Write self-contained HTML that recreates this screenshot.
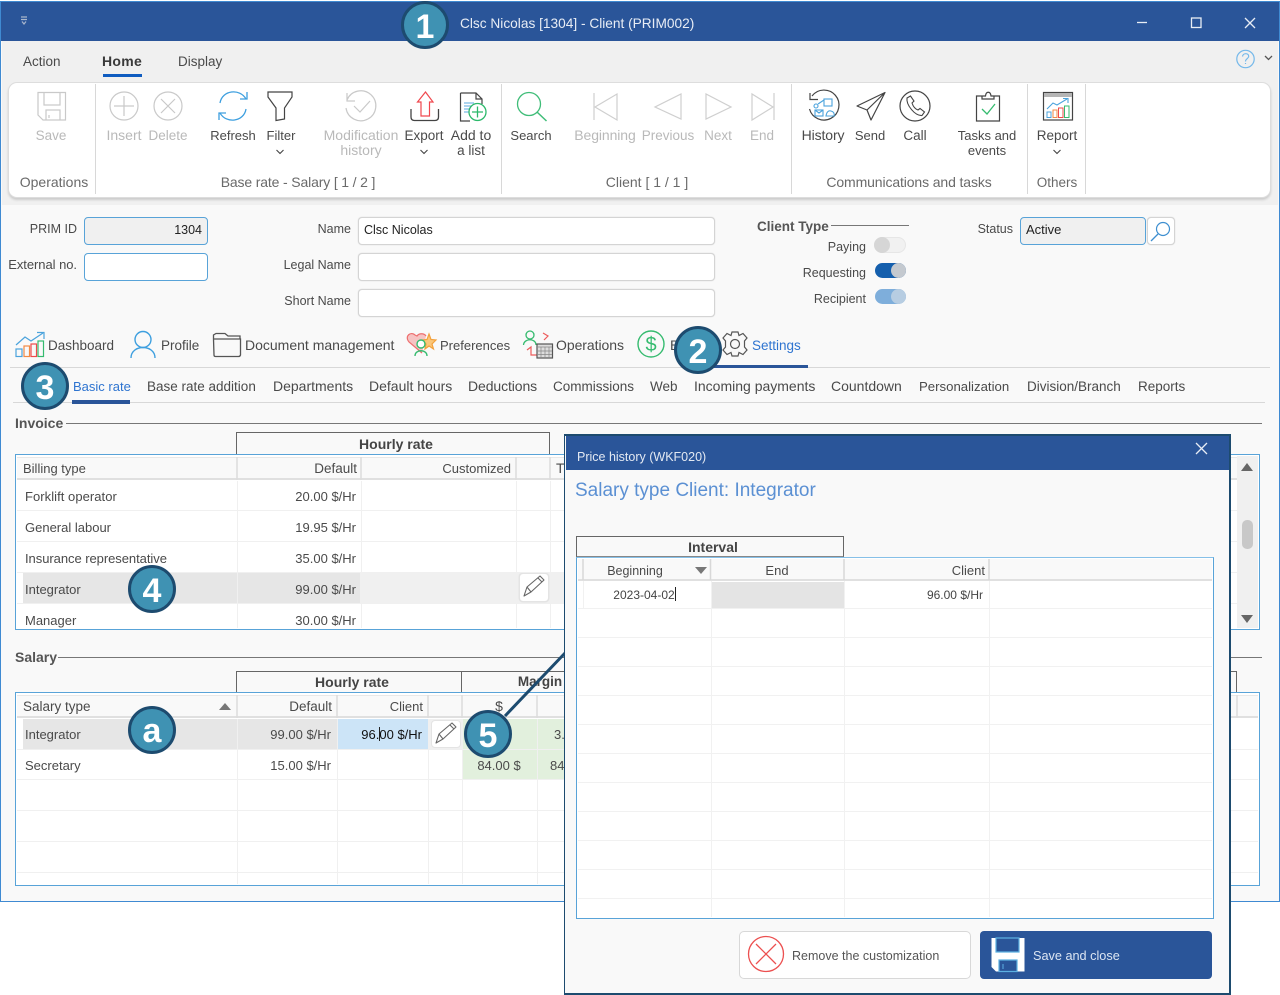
<!DOCTYPE html>
<html><head><meta charset="utf-8"><title>Clsc Nicolas</title>
<style>
html,body{margin:0;padding:0;background:#fff}
#p{position:relative;width:1280px;height:995px;overflow:hidden;background:#fff;font-family:"Liberation Sans",Arial,sans-serif}
.b{position:absolute;box-sizing:border-box}
.t{position:absolute;white-space:nowrap;font-size:14px;line-height:16px;color:#4a4a4a;margin-top:-8px}
.c{transform:translateX(-50%)}
.d{color:#b9b9b9}
.g{color:#6a6a6a}
.r{font-size:13px;color:#4a4a4a}
.l{font-size:12.5px;color:#4a4a4a;margin-top:-7px}
.s{font-size:13.500px;margin-top:-7px}
.m{font-size:13px;margin-top:-7px}
.h{font-weight:bold;font-size:14px;color:#444}
.i{background:#fff;border:1px solid #d4d4d4;border-radius:4px;box-shadow:0 0 1px #ccc}
.bi{border:1.5px solid #58a3d8;border-radius:4px}
.n{position:absolute;width:48px;height:48px;box-sizing:border-box;border:3px solid #1d4b6f;border-radius:50%;background:#3f92b3;color:#fff;font-weight:bold;font-size:34px;line-height:47px;text-align:center;font-family:"Liberation Sans",sans-serif}
svg{position:absolute;left:0;top:0}
</style></head><body><div id="p">

<!-- window -->
<div class="b" style="left:0;top:1px;width:1280px;height:901px;background:#f9f9f9;border:1.5px solid #3f8ad2"></div>
<div class="b" style="left:1px;top:2px;width:1278px;height:39px;background:#2a5599"></div>
<div class="b" style="left:2px;top:41px;width:1276px;height:164px;background:#f0f0f0"></div>
<div class="b" style="left:8px;top:82px;width:1263px;height:116px;background:#fff;border:1px solid #ddd;border-radius:9px;box-shadow:0 2px 2px #ccc"></div>

<div class="t" style="left:460px;top:24px;color:#e8edf5;font-size:13.700px">Clsc Nicolas [1304] - Client (PRIM002)</div>

<div class="t s" style="left:23px;top:61px">Action</div>
<div class="t" style="left:102px;top:61px;font-weight:bold;font-size:14px;letter-spacing:.3px;color:#3a3a3a">Home</div>
<div class="b" style="left:103px;top:74px;width:39px;height:3px;background:#0f5cc0"></div>
<div class="t s" style="left:178px;top:61px">Display</div>

<!-- ribbon labels -->
<div class="t c d s" style="left:51px;top:135px">Save</div>
<div class="t c d" style="left:124px;top:135px">Insert</div>
<div class="t c d s" style="left:168px;top:135px">Delete</div>
<div class="t c m" style="left:233px;top:135px">Refresh</div>
<div class="t c m" style="left:281px;top:135px">Filter</div>
<div class="t c d" style="left:361px;top:135px">Modification</div>
<div class="t c d" style="left:361px;top:150px">history</div>
<div class="t c s" style="left:424px;top:135px">Export</div>
<div class="t c" style="left:471px;top:135px">Add to</div>
<div class="t c s" style="left:471px;top:150px">a list</div>
<div class="t c m" style="left:531px;top:135px">Search</div>
<div class="t c d" style="left:605px;top:135px;letter-spacing:-.1px">Beginning</div>
<div class="t c d s" style="left:668px;top:135px">Previous</div>
<div class="t c d s" style="left:718px;top:135px">Next</div>
<div class="t c d s" style="left:762px;top:135px">End</div>
<div class="t c" style="left:823px;top:135px;letter-spacing:-.1px">History</div>
<div class="t c m" style="left:870px;top:135px">Send</div>
<div class="t c s" style="left:915px;top:135px">Call</div>
<div class="t c m" style="left:987px;top:135px">Tasks and</div>
<div class="t c m" style="left:987px;top:150px">events</div>
<div class="t c s" style="left:1057px;top:135px">Report</div>
<div class="t c g" style="left:54px;top:182px">Operations</div>
<div class="t c g" style="left:298px;top:182px;letter-spacing:-.15px">Base rate - Salary [ 1 / 2 ]</div>
<div class="t c g" style="left:647px;top:182px">Client [ 1 / 1 ]</div>
<div class="t c g" style="left:909px;top:182px;letter-spacing:-.12px">Communications and tasks</div>
<div class="t c g s" style="left:1057px;top:182px">Others</div>

<!-- form -->
<div class="t l" style="right:1203px;top:228px">PRIM ID</div>
<div class="b bi" style="left:84px;top:217px;width:124px;height:28px;background:#f0f0f0"></div>
<div class="t l" style="right:1078px;top:229px;color:#222">1304</div>
<div class="t r" style="right:1203px;top:265px;letter-spacing:-.05px">External no.</div>
<div class="b bi" style="left:84px;top:253px;width:124px;height:28px;background:#fff"></div>
<div class="t l" style="right:929px;top:228px">Name</div>
<div class="b i" style="left:358px;top:217px;width:357px;height:28px"></div>
<div class="t l" style="left:364px;top:229px;color:#222">Clsc Nicolas</div>
<div class="t l" style="right:929px;top:264px">Legal Name</div>
<div class="b i" style="left:358px;top:253px;width:357px;height:28px"></div>
<div class="t l" style="right:929px;top:300px">Short Name</div>
<div class="b i" style="left:358px;top:289px;width:357px;height:28px"></div>

<div class="t h" style="left:757px;top:227px;color:#555;font-size:13.500px">Client Type</div>
<div class="b" style="left:831px;top:225px;width:78px;height:1px;background:#777"></div>
<div class="t l" style="right:414px;top:246px">Paying</div>
<div class="b" style="left:874px;top:237px;width:32px;height:16px;border-radius:8px;background:#f1f1f1;border:1px solid #e6e6e6"></div>
<div class="b" style="left:874px;top:237px;width:16px;height:16px;border-radius:50%;background:#d6d6d6"></div>
<div class="t l" style="right:414px;top:272px">Requesting</div>
<div class="b" style="left:875px;top:263px;width:31px;height:15px;border-radius:8px;background:#155fad"></div>
<div class="b" style="left:891px;top:263px;width:15px;height:15px;border-radius:50%;background:#c4c9cf"></div>
<div class="t l" style="right:414px;top:298px">Recipient</div>
<div class="b" style="left:875px;top:289px;width:31px;height:15px;border-radius:8px;background:#7eaedb"></div>
<div class="b" style="left:891px;top:289px;width:15px;height:15px;border-radius:50%;background:#b7cde2"></div>
<div class="t l" style="right:267px;top:228px">Status</div>
<div class="b bi" style="left:1020px;top:217px;width:126px;height:28px;background:#f0f0f0"></div>
<div class="t r" style="left:1026px;top:230px;color:#222">Active</div>
<div class="b i" style="left:1147px;top:217px;width:28px;height:28px"></div>

<!-- tabs -->
<div class="t s" style="left:48px;top:345px">Dashboard</div>
<div class="t s" style="left:161px;top:345px">Profile</div>
<div class="t" style="left:245px;top:345px">Document management</div>
<div class="t m" style="left:440px;top:345px">Preferences</div>
<div class="t" style="left:556px;top:345px;letter-spacing:-.05px">Operations</div>
<div class="t" style="left:670px;top:345px">B</div>
<div class="t s" style="left:752px;top:345px;color:#2e74d0">Settings</div>
<div class="b" style="left:10px;top:367px;width:1260px;height:1px;background:#d8d8d8"></div>
<div class="b" style="left:712px;top:365px;width:96px;height:3px;background:#2a5599"></div>

<div class="t m" style="left:73px;top:386px;color:#2e74d0">Basic rate</div>
<div class="t s" style="left:147px;top:386px">Base rate addition</div>
<div class="t" style="left:273px;top:386px">Departments</div>
<div class="t" style="left:369px;top:386px">Default hours</div>
<div class="t" style="left:468px;top:386px;letter-spacing:-.1px">Deductions</div>
<div class="t s" style="left:553px;top:386px">Commissions</div>
<div class="t s" style="left:650px;top:386px">Web</div>
<div class="t" style="left:694px;top:386px">Incoming payments</div>
<div class="t" style="left:831px;top:386px">Countdown</div>
<div class="t" style="left:919px;top:387px;font-size:13.200px">Personalization</div>
<div class="t s" style="left:1027px;top:386px">Division/Branch</div>
<div class="t s" style="left:1138px;top:386px">Reports</div>
<div class="b" style="left:13px;top:402px;width:1252px;height:1px;background:#d8d8d8"></div>
<div class="b" style="left:72px;top:400px;width:58px;height:4px;background:#2a5599"></div>

<!-- invoice -->
<div class="t h" style="left:15px;top:423px;color:#555">Invoice</div>
<div class="b" style="left:66px;top:423px;width:1196px;height:1px;background:#777"></div>
<div class="b" style="left:236px;top:432px;width:314px;height:23px;border:1px solid #666;border-bottom:none"></div>
<div class="t h c" style="left:396px;top:444px">Hourly rate</div>
<div class="b" style="left:15px;top:454px;width:1245px;height:176px;background:#fff;border:1.5px solid #58a3d8"></div>
<div class="b" style="left:17px;top:457px;width:1220px;height:23px;background:#f9f9f9;border-bottom:2px solid #e0e0e0;border-top:1px solid #e8e8e8"></div>
<div class="b" style="left:23px;top:572px;width:337px;height:31px;background:#e6e6e6"></div>
<div class="b" style="left:360px;top:572px;width:204px;height:31px;background:#f0f0f0"></div>
<div class="b" style="left:1237px;top:456px;width:21px;height:172px;background:#f0f0f0"></div>
<div class="b" style="left:1242px;top:520px;width:11px;height:29px;border-radius:5px;background:#c8c8c8"></div>

<div class="t r" style="left:23px;top:469px">Billing type</div>
<div class="t r s" style="right:923px;top:468px">Default</div>
<div class="t r" style="right:769px;top:469px">Customized</div>
<div class="t r" style="left:556px;top:468px;font-size:14px">T</div>
<div class="t r" style="left:25px;top:497px;letter-spacing:.05px">Forklift operator</div>
<div class="t r" style="right:924px;top:497px">20.00 $/Hr</div>
<div class="t r" style="left:25px;top:528px">General labour</div>
<div class="t r" style="right:924px;top:528px">19.95 $/Hr</div>
<div class="t r" style="left:25px;top:559px;letter-spacing:-.05px">Insurance representative</div>
<div class="t r" style="right:924px;top:559px">35.00 $/Hr</div>
<div class="t r" style="left:25px;top:590px">Integrator</div>
<div class="t r" style="right:924px;top:590px">99.00 $/Hr</div>
<div class="t r" style="left:25px;top:621px">Manager</div>
<div class="t r" style="right:924px;top:621px">30.00 $/Hr</div>
<div class="b i" style="left:519px;top:573px;width:30px;height:29px;border-color:#e4e4e4"></div>

<!-- salary -->
<div class="t h" style="left:15px;top:657px;color:#555">Salary</div>
<div class="b" style="left:58px;top:657px;width:1204px;height:1px;background:#777"></div>
<div class="b" style="left:236px;top:671px;width:226px;height:22px;border:1px solid #666;border-bottom:none"></div>
<div class="b" style="left:462px;top:671px;width:775px;height:22px;border:1px solid #666;border-left:none;border-bottom:none"></div>
<div class="t h c" style="left:352px;top:682px">Hourly rate</div>
<div class="t h c" style="left:540px;top:682px;font-size:13.500px">Margin</div>
<div class="b" style="left:15px;top:692px;width:1245px;height:194px;background:#fff;border:1.5px solid #58a3d8"></div>
<div class="b" style="left:17px;top:695px;width:1241px;height:23px;background:#f9f9f9;border-bottom:2px solid #e0e0e0;border-top:1px solid #e8e8e8"></div>
<div class="b" style="left:23px;top:719px;width:314px;height:30px;background:#e6e6e6"></div>
<div class="b" style="left:338px;top:719px;width:90px;height:30px;background:#cce4f7"></div>
<div class="b" style="left:429px;top:719px;width:33px;height:30px;background:#f0f0f0"></div>
<div class="b" style="left:463px;top:719px;width:101px;height:60px;background:#e2f0dd"></div>
<div class="b" style="left:431px;top:720px;width:30px;height:28px;background:#fff;border:1px solid #e4e4e4;border-radius:4px"></div>
<div class="t r s" style="left:23px;top:706px">Salary type</div>
<div class="t r s" style="right:948px;top:706px">Default</div>
<div class="t r" style="right:857px;top:707px">Client</div>
<div class="t r c" style="left:499px;top:706px;font-size:14px">$</div>
<div class="t r" style="left:25px;top:735px">Integrator</div>
<div class="t r" style="right:949px;top:735px">99.00 $/Hr</div>
<div class="t r" style="right:858px;top:735px;color:#111">96.00 $/Hr</div>
<div class="b" style="left:379px;top:727px;width:1px;height:14px;background:#222"></div>
<div class="t r" style="left:554px;top:735px">3.</div>
<div class="t r" style="left:25px;top:766px">Secretary</div>
<div class="t r" style="right:949px;top:766px">15.00 $/Hr</div>
<div class="t r c" style="left:499px;top:766px">84.00 $</div>
<div class="t r" style="left:550px;top:766px">84</div>

<!-- grid lines and icons -->
<svg width="1280" height="995" fill="none">
<!-- invoice grid -->
<g stroke="#f0f0f0">
<path d="M17 510.500H1237M17 541.500H1237M17 572.500H1237M17 603.500H1237"/>
<path d="M237.500 481V628M361.500 481V628M516.500 481V628M550.500 481V628"/>
<path d="M17 749.500H1258M17 779.500H1258M17 810.500H1258M17 841.500H1258M17 872.500H1258"/>
<path d="M237.500 719V884M337.500 719V884M428.500 719V884M462.500 719V884M537.500 719V884"/>
</g>
<g stroke="#dcdcdc" stroke-width="1.500">
<path d="M237 457V480M361 457V480M516 457V480M550 457V480"/>
<path d="M237 695V718M337 695V718M428 695V718M462 695V718M537 695V718M1237 695V718"/>
</g>
<path d="M1241 471L1247 463L1253 471ZM1241 615L1253 615L1247 623Z" fill="#666"/>
<path d="M219 710L225 703L231 710Z" fill="#777"/>
<!-- pencils -->
<g stroke="#666" stroke-width="1.100" stroke-linejoin="round">
<path d="M524 597L527 588L540 577L544 581L531 593ZM527 588L531 593M538 579L542 583" transform="translate(0,-1)"/>
<path d="M436 743L439 734L452 723L456 727L443 739ZM439 734L443 739M450 725L454 729"/>
</g>
<!-- title bar -->
<path d="M21 17H27M21 19.500H27M22 21.500L24 24L26 21.500" stroke="#a9b6cc" stroke-width="1.200"/>
<path d="M1137 22.500H1147" stroke="#e8edf5" stroke-width="1.300"/>
<rect x="1191.500" y="18" width="9.500" height="9.500" stroke="#e8edf5" stroke-width="1.300"/>
<path d="M1245 18L1255 28M1255 18L1245 28" stroke="#e8edf5" stroke-width="1.300"/>
<circle cx="1245.500" cy="59" r="8.700" stroke="#74b8ea" stroke-width="1.200"/>
<path d="M1242.500 56.500C1243 52.500 1249 53 1248.700 56.500C1248.500 58.500 1245.500 58.800 1245.500 61.500M1245.500 63V64" stroke="#74b8ea" stroke-width="1.200"/>
<path d="M1265 56L1268.500 59.500L1272 56" stroke="#555" stroke-width="1.300"/>
<!-- ribbon separators -->
<path d="M95.500 84V194M501.500 84V194M791.500 84V194M1027.500 84V194M1085.500 84V194" stroke="#d8d8d8"/>
<!-- save -->
<g stroke="#c9c9c9" stroke-width="1.200">
<path d="M38 92.500H65.500V120H43L38 115Z"/><path d="M44 92.500V105H60V92.500M46 120V110H60V120M49 115V118"/>
<circle cx="124" cy="106" r="14"/><path d="M124 96V116M114 106H134"/>
<circle cx="168" cy="106" r="14"/><path d="M161 99L175 113M175 99L161 113"/>
<path d="M347 100A15 15 0 1 1 346 108M347 93V101H355M354 106L360 112L370 101"/>
</g>
<!-- refresh -->
<g stroke="#3d9fdf" stroke-width="1.300">
<path d="M220 103C222 90 240 88 246 99M246 109C244 122 226 124 220 113"/>
<path d="M247 92V99H240M219 120V113H226"/>
</g>
<!-- filter -->
<path d="M268 92H292V97L284.500 108V119L276 120.500V108L268 97Z" stroke="#444" stroke-width="1.200"/>
<!-- export -->
<path d="M425.500 92L433 102H429.500V116H421V102H417.500Z" stroke="#f0484e" stroke-width="1.200"/>
<path d="M411 109V117Q411 120.500 414.500 120.500H435Q438.500 120.500 438.500 117V109" stroke="#444" stroke-width="1.300"/>
<path d="M276.500 150L280 153.500L283.500 150M420.500 150L424 153.500L427.500 150M1053.500 150L1057 153.500L1060.500 150" stroke="#444" stroke-width="1.100"/>
<!-- add list -->
<path d="M460.500 93H476L482 99V104M476 93V99H482M460.500 93V121H470" stroke="#444" stroke-width="1.200"/>
<path d="M464 103H474M464 106H472M464 109H470M464 112H469" stroke="#5aa8df"/>
<circle cx="477.500" cy="112" r="8.500" fill="#fff" stroke="#2cb96b" stroke-width="1.300"/>
<path d="M477.500 106.500V117.500M472 112H483" stroke="#2cb96b" stroke-width="1.300"/>
<!-- search -->
<circle cx="529" cy="104" r="11.500" stroke="#3fbd78" stroke-width="1.300"/><path d="M537 112L546.500 121" stroke="#3fbd78" stroke-width="1.500"/>
<!-- nav -->
<g stroke="#cfcfcf" stroke-width="1.200">
<path d="M594 93V120M617 94V120L595 107Z"/>
<path d="M681 94V119L655 107Z"/>
<path d="M706 94V119L731 107Z"/>
<path d="M752 94V120L773 107ZM774 93V120"/>
</g>
<!-- history -->
<path d="M812 96A15 15 0 1 1 809.500 109M810 93V99.500H818" stroke="#444" stroke-width="1.200"/>
<g stroke="#4ba3dc" stroke-width="1.100">
<rect x="824" y="99" width="8" height="7"/><circle cx="816" cy="106" r="2"/><path d="M818 104L824 100"/>
<rect x="815" y="110" width="8" height="6"/><path d="M815 110L819 113L823 110M826 116H834Q835 112 831 111Q827 110 826 116Z"/>
</g>
<!-- send -->
<path d="M857 106L885 92.500L871 120L867 110ZM867 110L885 92.500" stroke="#444" stroke-width="1.200" stroke-linejoin="round"/>
<!-- call -->
<circle cx="915" cy="106" r="15" stroke="#444" stroke-width="1.200"/>
<path d="M907 98L910.500 96L914 101L912 103C913 106 915 109 918 110L920 108.500L924.500 112L922 115.500C915 116 906 105 907 98Z" stroke="#444" stroke-width="1.100"/>
<!-- tasks -->
<path d="M982 96H976.500V121H999.500V96H994M982 99V96H985.500C986 91 990.500 91 991 96H994V99Z" stroke="#444" stroke-width="1.200"/>
<path d="M982 109L987 114L995 104" stroke="#35bb6f" stroke-width="1.300"/>
<!-- report -->
<rect x="1043.500" y="92.500" width="29" height="27.500" stroke="#444" stroke-width="1.200"/>
<rect x="1044" y="93" width="28" height="4" fill="#b5b5b5"/>
<path d="M1047 109L1053 103L1057 105L1067 99M1063 98.500H1068V103" stroke="#4ba3dc" stroke-width="1.100"/>
<rect x="1047" y="112" width="4" height="5.500" stroke="#4ba3dc"/><rect x="1053" y="110" width="4" height="7.500" stroke="#f28a45"/><rect x="1058.500" y="108" width="4.500" height="9.500" stroke="#ee4b4b"/><rect x="1064.500" y="106" width="4.500" height="11.500" stroke="#35bb6f"/>
<!-- status search -->
<circle cx="1163" cy="229" r="6.500" stroke="#3e8fd0" stroke-width="1.200"/><path d="M1158 234L1151 241" stroke="#3e8fd0" stroke-width="1.300"/>
<!-- tabs icons -->
<g stroke-width="1.200">
<path d="M16 345L25 337L31 341L43 333M37 332.500H44V339" stroke="#4ba3dc"/>
<rect x="16" y="349" width="6" height="7.500" stroke="#4ba3dc"/><rect x="24" y="346" width="5.500" height="10.500" stroke="#f28a45"/><rect x="31" y="344" width="5.500" height="12.500" stroke="#ee4b4b"/><rect x="38" y="341" width="5.500" height="15.500" stroke="#35bb6f"/>
<circle cx="143" cy="339.500" r="8" stroke="#3d9fdf" stroke-width="1.400"/>
<path d="M131 358C131 344 155 344 155 358" stroke="#3d9fdf" stroke-width="1.400"/>
<path d="M213.500 339V335L216 333.500H225L228 336H240V339M213.500 339H240.500V355Q240 356.500 238.500 356.500H215.500Q214 356.500 214 355Z" stroke="#555" stroke-width="1.300"/>
<path d="M422 353L409 342C404 336 411 331 415 335L417 336C419 333 424 333 426 336" fill="#f6c3c3" stroke="#ee6f6f"/>
<path d="M429 334L431 339.500L436 340L432 344L433.500 349L429 346L425 349L426 344L422.500 340L427 339.500Z" fill="#fbc77a" stroke="#f3a13c"/>
<circle cx="421" cy="344" r="4" fill="#fff" stroke="#35bb6f" stroke-width="1.400"/><path d="M415 356C415 349 427 349 427 356" stroke="#35bb6f" stroke-width="1.400"/>
<circle cx="530" cy="335" r="4" stroke="#35bb6f" stroke-width="1.300"/><path d="M523.500 345C524 338 536 338 536 345" stroke="#35bb6f" stroke-width="1.300"/>
<path d="M543 333L548 336L544 340M527 350L531 347V355H537" stroke="#ee5b5b" stroke-width="1.200"/>
<rect x="537" y="344" width="15.500" height="14" fill="#ddd" stroke="#555" stroke-width="1.200"/><path d="M537 347H552M541 347V358M545 347V358M549 347V358M537 351H552M537 354.500H552" stroke="#888" stroke-width=".7"/>
<circle cx="651" cy="344" r="13" stroke="#35bb6f" stroke-width="1.400"/>
<text x="651" y="351" text-anchor="middle" font-family="Liberation Sans,sans-serif" font-size="20" fill="#35bb6f">$</text>
</g>
<!-- gear -->
<g transform="translate(735,344)" stroke="#555" stroke-width="1.200">
<circle r="4.500"/>
<path d="M-3-12H3L4-8.500L8-10.500L12-6L9.500-3L9.500 3L12 6L8 10.500L4 8.500L3 12H-3L-4 8.500L-8 10.500L-12 6L-9.500 3L-9.500-3L-12-6L-8-10.500L-4-8.500Z"/>
</g>
<!-- connector -->
<path d="M505 716L566 652" stroke="#1d4b6f" stroke-width="3"/>
</svg>

<div class="n" style="left:401px;top:1px">1</div>
<div class="n" style="left:674px;top:326px">2</div>
<div class="n" style="left:21px;top:362px">3</div>
<div class="n" style="left:128px;top:565px">4</div>
<div class="n" style="left:128px;top:706px;line-height:45px">a</div>
<div class="n" style="left:464px;top:710px">5</div>

<!-- dialog -->
<div class="b" style="left:564px;top:434px;width:667px;height:561px;background:#f9f9f9;border:2px solid #1d4b6f;border-left-width:1.500px"></div>
<div class="b" style="left:566px;top:436px;width:663px;height:34px;background:#2a5599"></div>
<div class="t l" style="left:577px;top:456px;color:#e3e9f2">Price history (WKF020)</div>
<div class="t" style="left:575px;top:491px;font-size:19px;line-height:24px;margin-top:-12px;color:#5b90d3">Salary type Client: Integrator</div>
<div class="b" style="left:576px;top:536px;width:268px;height:22px;border:1px solid #666;border-bottom:2px solid #888"></div>
<div class="t h c" style="left:713px;top:547px">Interval</div>
<div class="b" style="left:576px;top:557px;width:638px;height:362px;background:#fff;border:1.500px solid #58a3d8;border-top-color:#86c0e8"></div>
<div class="b" style="left:578px;top:559px;width:634px;height:22px;background:#f9f9f9;border-bottom:2px solid #e0e0e0"></div>
<div class="b" style="left:712px;top:582px;width:132px;height:26px;background:#e4e4e4"></div>
<div class="t l c" style="left:635px;top:570px">Beginning</div>
<div class="t r c" style="left:777px;top:571px">End</div>
<div class="t r" style="right:295px;top:571px">Client</div>
<div class="t c" style="left:644px;top:595px;font-size:12px;color:#444">2023-04-02</div>
<div class="b" style="left:675px;top:587px;width:1px;height:14px;background:#222"></div>
<div class="t" style="right:297px;top:595px;font-size:12px;color:#444">96.00 $/Hr</div>
<div class="b" style="left:739px;top:931px;width:232px;height:48px;background:#fff;border:1px solid #d8d8d8;border-radius:5px"></div>
<div class="t l" style="left:792px;top:955px;color:#555">Remove the customization</div>
<div class="b" style="left:980px;top:931px;width:232px;height:48px;background:#2a5599;border-radius:4px"></div>
<div class="t" style="left:1033px;top:956px;font-size:12.700px;color:#dbe5f2">Save and close</div>
<svg width="1280" height="995" fill="none">
<path d="M1196 443L1207 454M1207 443L1196 454" stroke="#e8edf5" stroke-width="1.300"/>
<g stroke="#f1f1f1">
<path d="M578 608.500H1212M578 637.500H1212M578 666.500H1212M578 695.500H1212M578 724.500H1212M578 753.500H1212M578 782.500H1212M578 811.500H1212M578 840.500H1212M578 869.500H1212M578 898.500H1212"/>
<path d="M583.500 581V608M711.500 581V917M844.500 581V917M989.500 581V917"/>
</g>
<path d="M583 559V580M710.500 559V580M844 559V580M989 559V580" stroke="#d8d8d8" stroke-width="1.500"/>
<path d="M695 567H707L701 574Z" fill="#777"/>
<circle cx="766" cy="954" r="17.500" stroke="#ec5050" stroke-width="1.300"/>
<path d="M756 944L776 964M776 944L756 964" stroke="#ec5050" stroke-width="1.300"/>
<path d="M991.500 938H1024.500V971.500H996L991.500 967Z" fill="#fff"/>
<path d="M996 938V952H1019V938Z" fill="#2a5599" stroke="#5cb0e2" stroke-width="1.200"/>
<path d="M999 971.500V960H1017V971.500Z" fill="#2a5599" stroke="#5cb0e2" stroke-width="1.200"/>
<path d="M1003 964V969" stroke="#5cb0e2"/>
</svg>
</div></body></html>
